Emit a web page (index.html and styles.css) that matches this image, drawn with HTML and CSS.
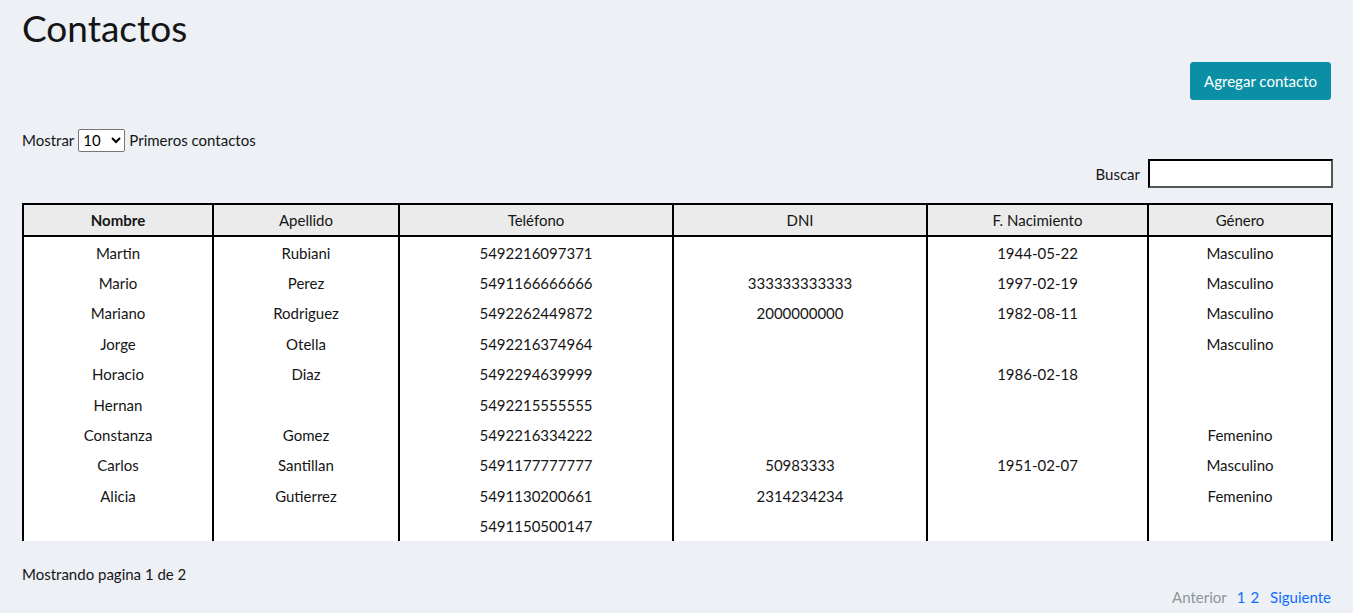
FILE: index.html
```html
<!DOCTYPE html>
<html lang="es">
<head>
    <meta charset="UTF-8">
    <meta name="viewport" content="width=device-width, initial-scale=1.0">
    <title>Contactos</title>
    <link rel="stylesheet" href="styles.css">
</head>
<body>
    <div class="page">
        <h1 class="titulo">Contactos</h1>

        <div class="acciones">
            <button class="btn-agregar">Agregar contacto</button>
        </div>

        <div class="mostrar">
            Mostrar
            <select class="cantidad">
                <option>10</option>
                <option>25</option>
                <option>50</option>
            </select>
            Primeros contactos
        </div>

        <div class="buscar">
            <label for="buscar">Buscar</label>
            <input type="text" id="buscar">
        </div>

        <div class="tabla-wrap">
            <table class="tabla">
                <thead>
                    <tr>
                        <th class="c-nombre activo">Nombre</th>
                        <th class="c-apellido">Apellido</th>
                        <th class="c-telefono">Teléfono</th>
                        <th class="c-dni">DNI</th>
                        <th class="c-nacimiento">F. Nacimiento</th>
                        <th class="c-genero">Género</th>
                    </tr>
                </thead>
                <tbody>
                    <tr><td>Martin</td><td>Rubiani</td><td>5492216097371</td><td></td><td>1944-05-22</td><td>Masculino</td></tr>
                    <tr><td>Mario</td><td>Perez</td><td>5491166666666</td><td>333333333333</td><td>1997-02-19</td><td>Masculino</td></tr>
                    <tr><td>Mariano</td><td>Rodriguez</td><td>5492262449872</td><td>2000000000</td><td>1982-08-11</td><td>Masculino</td></tr>
                    <tr><td>Jorge</td><td>Otella</td><td>5492216374964</td><td></td><td></td><td>Masculino</td></tr>
                    <tr><td>Horacio</td><td>Diaz</td><td>5492294639999</td><td></td><td>1986-02-18</td><td></td></tr>
                    <tr><td>Hernan</td><td></td><td>5492215555555</td><td></td><td></td><td></td></tr>
                    <tr><td>Constanza</td><td>Gomez</td><td>5492216334222</td><td></td><td></td><td>Femenino</td></tr>
                    <tr><td>Carlos</td><td>Santillan</td><td>5491177777777</td><td>50983333</td><td>1951-02-07</td><td>Masculino</td></tr>
                    <tr><td>Alicia</td><td>Gutierrez</td><td>5491130200661</td><td>2314234234</td><td></td><td>Femenino</td></tr>
                    <tr><td></td><td></td><td>5491150500147</td><td></td><td></td><td></td></tr>
                </tbody>
            </table>
        </div>

        <p class="info">Mostrando pagina 1 de 2</p>

        <nav class="paginacion">
            <span class="deshabilitado">Anterior</span>
            <a href="#">1</a>
            <a href="#">2</a>
            <a href="#">Siguiente</a>
        </nav>
    </div>
</body>
</html>
```

FILE: styles.css
```css
*{
    margin: 0;padding: 0;box-sizing: border-box;
}
body{
    background-color: #edf0f5;
    color: #151515;
    font-family: Lato, "Open Sans", sans-serif;
    font-size: 15px;
    line-height: 24px;
}
.page{
    padding: 0 20px 0 22px;
    display: flex;
    flex-direction: column;
}
.titulo{
    font-size: 37px;
    font-weight: 400;
    line-height: 48px;
    margin-top: 4px;
}

.acciones{
    display: flex;
    justify-content: flex-end;
    margin-top: 10px;
}
.btn-agregar{
    background-color: #0a8fa5;
    color: white;
    border: 1px solid #0a8fa5;
    border-radius: 3px;
    font-family: inherit;
    font-size: 15px;
    line-height: 24px;
    padding: 6px 13px;
    margin-right: 2px;
    cursor: pointer;
}

.mostrar{
    display: flex;
    align-items: center;
    gap: 4px;
    margin-top: 28px;
    height: 24px;
}
.cantidad{
    width: 47px;
    height: 23px;
    font-family: inherit;
    font-size: 15px;
    border: 1px solid #767676;
    border-radius: 2px;
    background-color: white;
    color: black;
}

.buscar{
    display: flex;
    justify-content: flex-end;
    align-items: center;
    gap: 8px;
    margin-top: 7px;
}
.buscar>input{
    width: 185px;
    height: 29px;
    border: 2px solid #000;
    border-right-color: #555;
    border-bottom-color: #555;
    background-color: white;
}

.tabla-wrap{
    margin-top: 15px;
    height: 338px;
    overflow: hidden;
}
.tabla{
    width: 100%;
    table-layout: fixed;
    border-collapse: collapse;
    border: 2px solid black;
    background-color: white;
    text-align: center;
}
.tabla th,
.tabla td{
    border-left: 2px solid black;
    border-right: 2px solid black;
    padding: 3.2px 4px;
    line-height: 24px;
    height: 30.4px;
    white-space: nowrap;
}
.tabla thead th{
    background-color: #ebebeb;
    font-weight: 400;
    border-bottom: 2px solid black;
}
.tabla thead th.activo{
    font-weight: 700;
}
.c-nombre{ width: 190px; }
.c-apellido{ width: 186px; }
.c-telefono{ width: 274px; }
.c-dni{ width: 254px; }
.c-nacimiento{ width: 221px; }

.info{
    margin-top: 21px;
}
.paginacion{
    display: flex;
    justify-content: flex-end;
    gap: 6px;
    line-height: 22px;
    margin-right: 2px;
}
.paginacion>a{
    color: #0d6efd;
    text-decoration: none;
}
.paginacion>a:nth-of-type(2){
    margin-left: -1px;
    margin-right: 5px;
}
.paginacion>.deshabilitado{
    color: #8e959c;
    margin-right: 4px;
}
```
